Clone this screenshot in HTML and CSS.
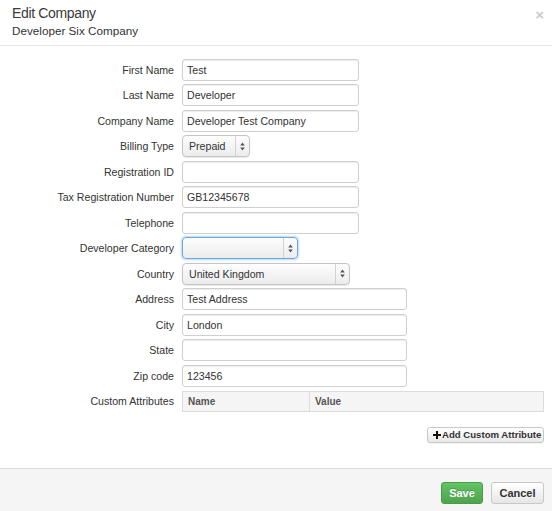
FILE: index.html
```
<!DOCTYPE html>
<html>
<head>
<meta charset="utf-8">
<link rel="stylesheet" href="styles.css">
</head>
<body>
<div class="modal">
  <div class="modal-header">
    <div class="head-text">
      <h3 class="title">Edit Company</h3>
      <div class="subtitle">Developer Six Company</div>
    </div>
    <span class="close">×</span>
  </div>
  <div class="modal-body">
    <form class="form">
      <label class="lbl">First Name</label>
      <div class="ctl"><div class="input">Test</div></div>
      <label class="lbl">Last Name</label>
      <div class="ctl"><div class="input">Developer</div></div>
      <label class="lbl">Company Name</label>
      <div class="ctl"><div class="input">Developer Test Company</div></div>
      <label class="lbl">Billing Type</label>
      <div class="ctl"><div class="select w-billing"><span class="sel-text">Prepaid</span><span class="sel-arrow"><svg width="5" height="9" viewBox="0 0 5 9"><path d="M2.5 0.5L4.8 3.6H0.2Z M2.5 8.5L4.8 5.4H0.2Z" fill="#555"/></svg></span></div></div>
      <label class="lbl">Registration ID</label>
      <div class="ctl"><div class="input"></div></div>
      <label class="lbl">Tax Registration Number</label>
      <div class="ctl"><div class="input">GB12345678</div></div>
      <label class="lbl">Telephone</label>
      <div class="ctl"><div class="input"></div></div>
      <label class="lbl">Developer Category</label>
      <div class="ctl"><div class="select w-cat focus"><span class="sel-text"></span><span class="sel-arrow"><svg width="5" height="9" viewBox="0 0 5 9"><path d="M2.5 0.5L4.8 3.6H0.2Z M2.5 8.5L4.8 5.4H0.2Z" fill="#555"/></svg></span></div></div>
      <label class="lbl">Country</label>
      <div class="ctl"><div class="select w-country"><span class="sel-text">United Kingdom</span><span class="sel-arrow"><svg width="5" height="9" viewBox="0 0 5 9"><path d="M2.5 0.5L4.8 3.6H0.2Z M2.5 8.5L4.8 5.4H0.2Z" fill="#555"/></svg></span></div></div>
      <label class="lbl">Address</label>
      <div class="ctl"><div class="input wide">Test Address</div></div>
      <label class="lbl">City</label>
      <div class="ctl"><div class="input wide">London</div></div>
      <label class="lbl">State</label>
      <div class="ctl"><div class="input wide"></div></div>
      <label class="lbl">Zip code</label>
      <div class="ctl"><div class="input wide">123456</div></div>
      <label class="lbl lbl-table">Custom Attributes</label>
      <div class="ctl table-ctl">
        <table class="attr-table">
          <thead><tr><th class="col-name">Name</th><th>Value</th></tr></thead>
        </table>
      </div>
    </form>
    <div class="add-row">
      <button class="btn btn-small" type="button"><svg class="plus" width="8" height="8" viewBox="0 0 8 8"><path d="M3 0H5V3H8V5H5V8H3V5H0V3H3Z" fill="#111"/></svg>Add Custom Attribute</button>
    </div>
  </div>
  <div class="modal-footer">
    <button class="btn btn-success" type="button">Save</button>
    <button class="btn btn-default" type="button">Cancel</button>
  </div>
</div>
</body>
</html>
```
FILE: styles.css
```
* { box-sizing: border-box; }
html, body { margin: 0; padding: 0; background: #fff; }
body {
  font-family: "Liberation Sans", Arial, Helvetica, sans-serif;
  color: #333;
  width: 552px;
  height: 511px;
  overflow: hidden;
}
.modal { display: flex; flex-direction: column; height: 511px; }
.modal-header {
  display: flex;
  justify-content: space-between;
  align-items: flex-start;
  padding: 4px 8px 7px 12px;
  border-bottom: 1px solid #e5e5e5;
}
.title {
  margin: 0;
  font-size: 14px;
  line-height: 18px;
  font-weight: normal;
  letter-spacing: -0.35px;
  color: #3a3a3a;
}
.subtitle {
  margin-top: 1.5px;
  font-size: 11.7px;
  line-height: 14px;
  color: #333;
}
.close {
  font-size: 15px;
  line-height: 18px;
  font-weight: bold;
  color: #000;
  opacity: 0.2;
  margin-top: 2px;
}
.modal-body { flex: 1; padding: 13px 8px 0 0; }
.form {
  display: grid;
  grid-template-columns: 174px 1fr;
  column-gap: 8px;
  row-gap: 3.54px;
  margin: 0;
}
.lbl {
  text-align: right;
  font-size: 10.6px;
  line-height: 22px;
  color: #333;
  white-space: nowrap;
}
.ctl { display: flex; align-items: center; height: 22px; }
.input {
  width: 177px;
  height: 22px;
  border: 1px solid #cfcfcf;
  border-radius: 3px;
  box-shadow: inset 0 1px 1px rgba(0,0,0,0.075);
  background: #fff;
  font-size: 10.6px;
  line-height: 20px;
  padding: 0 4px;
  color: #333;
}
.input.wide { width: 225px; }
.select {
  display: flex;
  height: 22px;
  border: 1px solid #c4c4c4;
  border-radius: 4px;
  background: linear-gradient(#fdfdfd, #ececec);
  box-shadow: 0 1px 1px rgba(0,0,0,0.08);
  font-size: 10.6px;
  line-height: 20px;
  color: #333;
}
.select.focus {
  border-color: #71a6dc;
  box-shadow: 0 0 2px 1px rgba(82,168,236,0.45);
}
.sel-text { flex: 1; padding-left: 6px; white-space: nowrap; }
.sel-arrow {
  width: 14px;
  border-left: 1px solid #d2d2d2;
  display: flex;
  align-items: center;
  justify-content: center;
}
.w-billing { width: 68px; }
.w-cat { width: 116px; }
.w-country { width: 168px; }
.lbl-table { line-height: 20px; margin-top: 0.5px; }
.table-ctl { height: auto; margin-top: 0.5px; }
.attr-table {
  width: 100%;
  border-collapse: collapse;
  border: 1px solid #dcdcdc;
}
.attr-table th {
  height: 20px;
  background: #f5f5f5;
  text-align: left;
  font-size: 10px;
  font-weight: bold;
  color: #555;
  padding: 0 5px;
  border: 1px solid #dcdcdc;
}
.attr-table .col-name { width: 127px; }
.add-row { display: flex; justify-content: flex-end; margin-top: 15px; }
.btn {
  font-family: "Liberation Sans", Arial, Helvetica, sans-serif;
  font-weight: bold;
  cursor: pointer;
  border-radius: 3px;
  margin: 0;
}
.btn-small {
  display: flex;
  align-items: center;
  width: 117px;
  height: 16px;
  padding: 0 0 0 5px;
  font-size: 9.6px;
  color: #333;
  border: 1px solid #c8c8c8;
  background: linear-gradient(#ffffff, #e8e8e8);
  box-shadow: 0 1px 1px rgba(0,0,0,0.05);
  white-space: nowrap;
}
.plus { margin-right: 1px; flex: none; }
.modal-footer {
  height: 43px;
  border-top: 1px solid #dcdcdc;
  background: #f5f5f5;
  display: flex;
  justify-content: flex-end;
  align-items: flex-start;
  gap: 8px;
  padding: 13px 8px 0 0;
}
.btn-success {
  width: 42px;
  height: 22px;
  font-size: 11px;
  color: #fff;
  text-shadow: 0 -1px 0 rgba(0,0,0,0.2);
  border: 1px solid #4a9c4a;
  background: linear-gradient(#62c462, #4fa34f);
  padding: 0;
}
.btn-default {
  width: 53px;
  height: 22px;
  font-size: 11px;
  color: #333;
  border: 1px solid #c8c8c8;
  background: linear-gradient(#ffffff, #e6e6e6);
  padding: 0;
}
```
